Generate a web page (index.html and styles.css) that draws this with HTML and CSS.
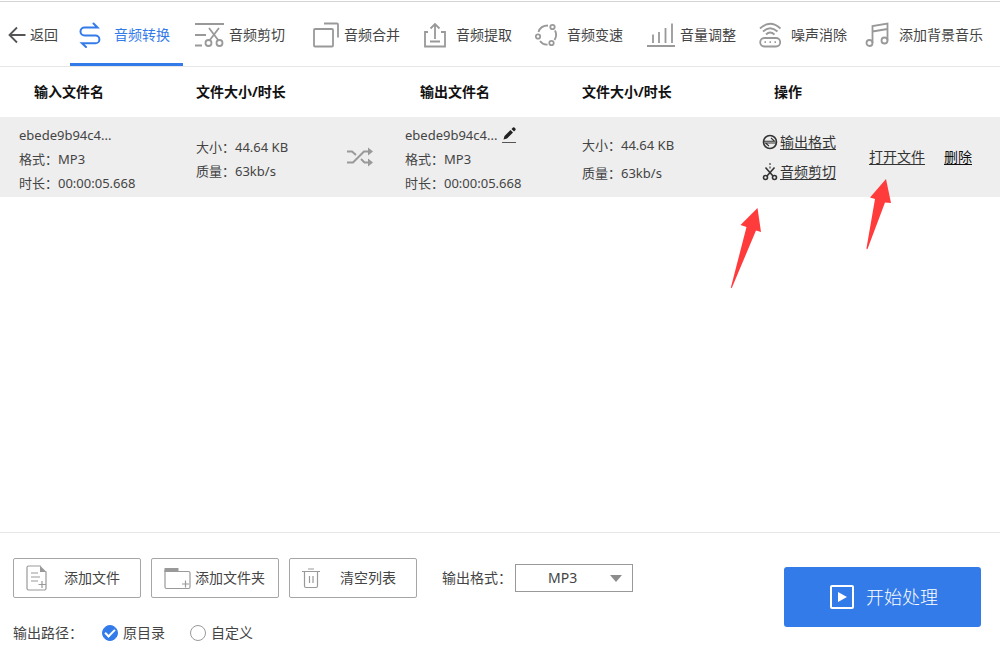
FILE: index.html
```html
<!DOCTYPE html>
<html lang="zh-CN">
<head>
<meta charset="utf-8">
<meta name="viewport" content="width=device-width, initial-scale=1">
<title>音频转换</title>
<link rel="stylesheet" href="styles.css">
</head>
<body>
<div class="app">
  <nav class="tabs">
    <button class="back" type="button">
      <svg class="icon dark" width="18" height="18" viewBox="0 0 18 18"><path d="M9 1.500L1.500 9L9 16.500M1.500 9H17.500"/></svg>
      <span>返回</span>
    </button>
    <button class="tab active" type="button">
      <svg class="icon" width="22" height="26" viewBox="0 0 22 26"><path d="M14.500 1.500L18.500 5.500H5.500A4 4 0 0 0 5.500 13.500H16.500A3.900 3.900 0 0 1 16.500 21.300H3L7 25"/></svg>
      <span>音频转换</span>
    </button>
    <button class="tab wide" type="button">
      <svg class="icon" width="30" height="26" viewBox="0 0 30 26"><path d="M1 2H30M1 13H12M1 23.500H8M15 6L24.500 18.500M25 6L15.500 18.500"/><circle cx="14.500" cy="21" r="3"/><circle cx="25.500" cy="21" r="3"/></svg>
      <span>音频剪切</span>
    </button>
    <button class="tab wide" type="button">
      <svg class="icon" width="26" height="26" viewBox="0 0 26 26"><rect x="1" y="7" width="19" height="17.500" rx="1"/><path d="M11 1.500H24Q25 1.500 25 2.500V15.500"/></svg>
      <span>音频合并</span>
    </button>
    <button class="tab" type="button">
      <svg class="icon" width="23" height="26" viewBox="0 0 23 26"><path d="M5 10H2V24.500H22V10H18M12 17V2M7.500 6.500L12 2L16.500 6.500M7 19.500H17"/></svg>
      <span>音频提取</span>
    </button>
    <button class="tab" type="button">
      <svg class="icon" width="22" height="26" viewBox="0 0 22 26"><circle cx="17.500" cy="5" r="2.200"/><circle cx="3" cy="14.500" r="2.200"/><circle cx="16.500" cy="21" r="2.200"/><path d="M13 3.500Q5.500 3.500 3.500 10M20 8.500Q22.500 13.500 19.500 18M5 19Q8 23 12.500 22.500"/></svg>
      <span>音频变速</span>
    </button>
    <button class="tab wide" type="button">
      <svg class="icon" width="28" height="26" viewBox="0 0 28 26"><path d="M0 24H28M6 12.500V21M12 10V21M18.500 6V21M25 1.500V21"/></svg>
      <span>音量调整</span>
    </button>
    <button class="tab" type="button">
      <svg class="icon" width="22" height="26" viewBox="0 0 22 26"><rect x="1.200" y="16" width="20" height="8.500" rx="4.200"/><path d="M1 6.500Q11-3 21.500 6.500M4 9.500Q11 3 18.500 9.500M7 12.500Q11 8.500 15.500 12.500M5.500 20.200H7M10.500 20.200H12M15.500 20.200H17"/></svg>
      <span>噪声消除</span>
    </button>
    <button class="tab" type="button">
      <svg class="icon" width="24" height="26" viewBox="0 0 24 26"><path d="M7.500 21V4L22.500 1.500V18.500M7.500 9.500L22.500 7"/><circle cx="4.500" cy="21" r="3"/><circle cx="19.500" cy="18.500" r="3"/></svg>
      <span>添加背景音乐</span>
    </button>
  </nav>

  <main class="list">
    <table class="files">
      <colgroup>
        <col class="c-name"><col class="c-size"><col class="c-mix"><col class="c-out"><col class="c-size2"><col class="c-ops"><col class="c-open"><col class="c-del">
      </colgroup>
      <thead>
        <tr>
          <th class="inset">输入文件名</th>
          <th>文件大小/时长</th>
          <th></th>
          <th class="inset-out">输出文件名</th>
          <th>文件大小/时长</th>
          <th class="inset-ops" colspan="3">操作</th>
        </tr>
      </thead>
      <tbody>
        <tr>
          <td class="first">
            <div class="line">ebede9b94c4...</div>
            <div class="line">格式：MP3</div>
            <div class="line">时长：00:00:05.668</div>
          </td>
          <td>
            <div class="line">大小：44.64 KB</div>
            <div class="line">质量：63kb/s</div>
          </td>
          <td class="raised">
            <svg class="mix" width="28" height="20" viewBox="0 0 28 20"><path d="M1 4.500H6L10 8M1 15.500H7L18 4.500H23M15 12L18.500 15.500H23"/><path class="solid" d="M22 0.500L27 4.500L22 8.500ZM22 11.500L27 15.500L22 19.500Z"/></svg>
          </td>
          <td>
            <div class="line name-line">ebede9b94c4...
              <button class="edit" type="button" aria-label="重命名"><svg width="14" height="16" viewBox="0 0 14 16"><path class="pen" d="M1.500 12.500L2.500 9L8.500 3L11 5.500L5 11.500ZM9.500 2L11 0.500Q12 0 13 1Q14 2 13.500 3L12 4.500Z"/><path class="rule" d="M0 15.500H14"/></svg></button>
            </div>
            <div class="line">格式：MP3</div>
            <div class="line">时长：00:00:05.668</div>
          </td>
          <td>
            <div class="line tall">大小：44.64 KB</div>
            <div class="line tall">质量：63kb/s</div>
          </td>
          <td class="ops raised">
            <a class="op" href="#"><svg width="16" height="16" viewBox="0 0 16 16"><circle cx="8" cy="8" r="6.500"/><path class="thin" d="M2 7.200H12.500L9 4M14 9H3.500L7 12"/></svg><span>输出格式</span></a>
            <a class="op" href="#"><svg width="16" height="18" viewBox="0 0 16 18"><path d="M3.500 4.500L11 13M12.500 4.500L5 13"/><path class="thin" d="M8 0V2M8 3.500V5.500"/><circle cx="3.500" cy="14.500" r="2"/><circle cx="12.500" cy="14.500" r="2"/></svg><span>音频剪切</span></a>
          </td>
          <td class="ops raised"><a href="#">打开文件</a></td>
          <td class="ops raised"><a class="delete" href="#">删除</a></td>
        </tr>
      </tbody>
    </table>
    <svg class="pointer pointer-ops" width="32" height="82" viewBox="0 0 32 82"><path d="M27.500 1L31 25L26 23.500L2 80.500Q0.500 82 1 80L16.500 20L10.500 18Z"/></svg>
    <svg class="pointer pointer-open" width="26" height="72" viewBox="0 0 26 72"><path d="M20 0L25 24L19 23.500L1.500 70Q0.500 71 0.500 69L9 20L4 18.500Z"/></svg>
  </main>

  <footer class="bar">
    <div class="settings">
      <div class="row">
        <button class="tool" type="button">
          <svg width="30" height="26" viewBox="0 0 30 26"><path d="M14.500 1H2.500Q1 1 1 2.500V23.500Q1 25 2.500 25H18.500Q20 25 20 23.500V6.500M5 8H12M5 12H14M5 16H12M16 16V23M12.500 19.500H19.500"/><path class="solid" d="M14 0.500L20.500 7H14Z"/></svg>
          <span>添加文件</span>
        </button>
        <button class="tool" type="button">
          <svg width="30" height="26" viewBox="0 0 30 26"><path d="M1 5V22Q1 23.500 2.500 23.500H24.500Q26 23.500 26 22V8Q26 6.500 24.500 6.500H1M21.500 15.500V22.500M18 19H25"/><path class="solid" d="M0.500 3H14.500V7H0.500Z"/></svg>
          <span>添加文件夹</span>
        </button>
        <button class="tool" type="button">
          <svg width="30" height="26" viewBox="0 0 30 26"><path d="M0 6.500H18M6 4H12M2.500 7V21Q2.500 22.500 4 22.500H14Q15.500 22.500 15.500 21V7M7.500 11V18M11 11V18"/></svg>
          <span>清空列表</span>
        </button>
        <label class="format-label" for="format">输出格式：</label>
        <div class="select">
          <select id="format"><option>MP3</option><option>WAV</option><option>M4A</option></select>
          <svg width="12" height="7" viewBox="0 0 12 7"><path d="M0 0H12L6 7Z"/></svg>
        </div>
      </div>
      <div class="row path" role="radiogroup" aria-labelledby="path-title">
        <span id="path-title" class="path-title">输出路径：</span>
        <label class="choice"><input type="radio" name="path" checked>原目录</label>
        <label class="choice"><input type="radio" name="path">自定义</label>
      </div>
    </div>
    <button class="start" type="button">
      <svg width="24" height="24" viewBox="0 0 24 24"><rect x="1" y="1" width="22" height="22" rx="1"/><path d="M8 7L17 12L8 17Z"/></svg>
      <span>开始处理</span>
    </button>
  </footer>
</div>
</body>
</html>
```
FILE: styles.css
```css
* {
  box-sizing: border-box;
}

body {
  margin: 0;
  background: #fff;
  color: #444;
  font: 14px/20px "Noto Sans", "Noto Sans CJK SC", sans-serif;
}

button,
select {
  font: inherit;
  color: inherit;
}

button {
  padding: 0;
  border: 0;
  background: none;
  white-space: nowrap;
}

svg {
  flex: none;
  fill: none;
}

.app {
  display: flex;
  flex-direction: column;
  min-height: 100vh;
  padding-top: 1px;
}

/* Top tabs */

.tabs {
  display: grid;
  grid-template-columns: 70fr 113fr 119fr 110fr 112fr 112fr 112fr 106fr 146fr;
  height: 66px;
  border-top: 1px solid #d4d4d4;
  border-bottom: 1px solid #e6e6e6;
}

.back,
.tab {
  display: flex;
  align-items: center;
  gap: 10px;
  min-width: 0;
  padding: 2px 0 0 11px;
}

.back {
  gap: 4px;
  padding-left: 8px;
}

.tab.wide {
  gap: 5px;
}

.tab.active {
  gap: 13px;
  padding-left: 9px;
  color: #347bea;
  box-shadow: inset 0 -3px #347bea;
}

.icon {
  stroke: #999;
  stroke-width: 1.8;
}

.icon.dark {
  stroke: #555;
}

.active .icon {
  stroke: #347bea;
  stroke-width: 2;
  stroke-linecap: round;
}

/* File list */

.list {
  position: relative;
  flex: 1;
}

.files {
  width: 100%;
  border-collapse: collapse;
  table-layout: fixed;
}

.c-name { width: 19.6%; }
.c-size { width: 15%; }
.c-mix { width: 5.9%; }
.c-out { width: 17.7%; }
.c-size2 { width: 18%; }
.c-ops { width: 10.7%; }
.c-open { width: 7.5%; }
.c-del { width: 5.6%; }

th {
  height: 50px;
  padding: 0;
  color: #111;
  font-weight: 700;
  text-align: left;
  white-space: nowrap;
}

th.inset { padding-left: 34px; }
th.inset-out { padding-left: 15px; }
th.inset-ops { padding-left: 12px; }

td {
  height: 80px;
  padding: 5px 0 1px;
  background: #eee;
  font-size: 13px;
  white-space: nowrap;
}

td.first {
  padding-left: 19px;
}

td.raised {
  padding: 2px 0;
}

.line {
  line-height: 24px;
}

.line.tall {
  line-height: 28px;
}

.name-line {
  display: flex;
  align-items: center;
  gap: 5px;
}

.edit {
  display: flex;
}

.pen {
  fill: #222;
}

.rule {
  stroke: #555;
}

.mix {
  display: block;
  stroke: #999;
  stroke-width: 2;
}

.solid {
  fill: #999;
  stroke: none;
}

.files .ops {
  font-size: 14px;
}

.ops a {
  color: #333;
  text-underline-offset: 2px;
}

.ops a.delete {
  color: #111;
}

.op {
  display: flex;
  align-items: center;
  gap: 2px;
  height: 30px;
  text-decoration: none;
}

.op span {
  text-decoration: underline;
  text-underline-offset: 2px;
}

.op svg {
  stroke: #333;
  stroke-width: 1.6;
}

.op .thin {
  stroke-width: 1.1;
}

.pointer {
  position: absolute;
  fill: #ff3b3b;
}

.pointer-ops {
  top: 140px;
  left: 73%;
}

.pointer-open {
  top: 112px;
  left: 86.6%;
}

/* Bottom bar */

.bar {
  display: flex;
  justify-content: space-between;
  gap: 24px;
  padding: 25px 19px 14px 13px;
  border-top: 1px solid #e6e6e6;
}

.settings {
  display: grid;
  gap: 23px;
}

.row {
  display: flex;
  align-items: center;
}

.tool {
  display: flex;
  align-items: center;
  width: 128px;
  height: 40px;
  margin-right: 10px;
  padding: 0 12px;
  border: 1px solid #a6a6a6;
  border-radius: 2px;
}

.tool svg {
  stroke: #999;
  stroke-width: 1.2;
}

.tool span {
  flex: 1;
  text-align: center;
}

.format-label {
  margin-left: 15px;
  white-space: nowrap;
}

.select {
  position: relative;
  width: 118px;
  margin-left: 3px;
}

.select select {
  display: block;
  width: 100%;
  height: 28px;
  padding: 0 32px;
  border: 1px solid #999;
  border-radius: 0;
  background: #fff;
  appearance: none;
}

.select svg {
  position: absolute;
  top: 11px;
  right: 11px;
  fill: #8c8c8c;
  pointer-events: none;
}

.path {
  height: 24px;
}

.path-title {
  margin-right: 19px;
}

.choice {
  display: flex;
  align-items: center;
  gap: 5px;
  margin-right: 25px;
}

.choice input {
  display: grid;
  place-items: center;
  width: 16px;
  height: 16px;
  margin: 0;
  border: 1px solid #999;
  border-radius: 50%;
  appearance: none;
}

.choice input:checked {
  border-color: #347bea;
  background: #347bea;
}

.choice input:checked::after {
  width: 8px;
  height: 4px;
  margin-bottom: 2px;
  border-bottom: 2px solid #fff;
  border-left: 2px solid #fff;
  content: "";
  transform: rotate(-45deg);
}

.start {
  display: flex;
  align-items: center;
  justify-content: center;
  gap: 12px;
  width: 197px;
  height: 60px;
  margin-top: 9px;
  padding-left: 3px;
  border-radius: 3px;
  background: #347bea;
  color: #fff;
  font-size: 18px;
  font-weight: 300;
}

.start svg {
  stroke: #fff;
  stroke-width: 2;
}

.start path {
  fill: #fff;
  stroke: none;
}
```
